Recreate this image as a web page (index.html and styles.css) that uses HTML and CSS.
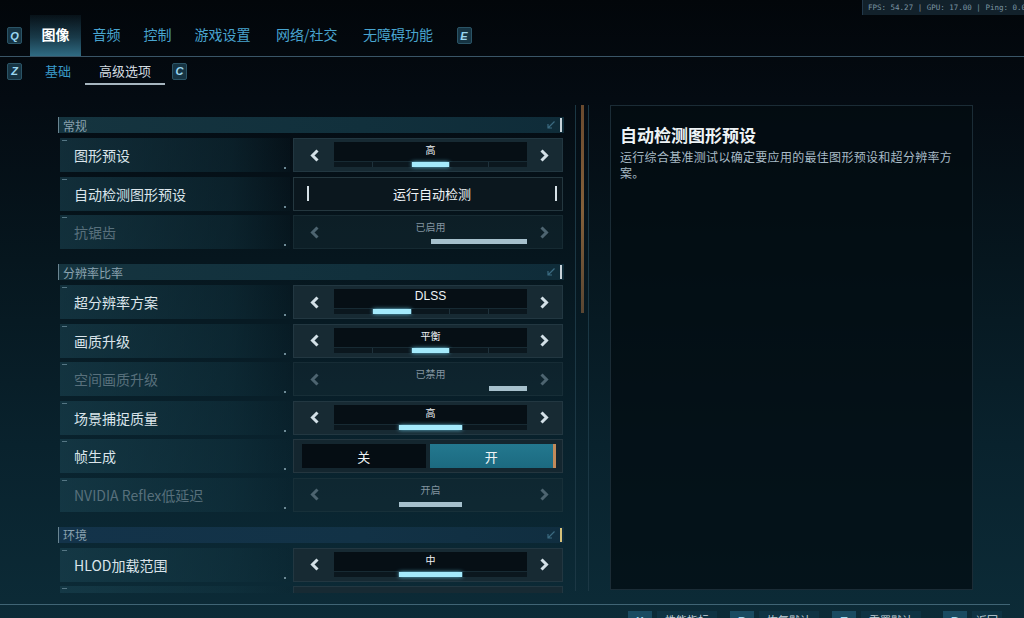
FILE: index.html
```html
<!DOCTYPE html>
<html lang="zh-CN">
<head>
  <meta charset="UTF-8" />
  <meta name="viewport" content="width=device-width, initial-scale=1" />
  <title>设置 | 图像</title>
  <link rel="stylesheet" href="styles.css">
</head>
<body>
  <div class="hud">FPS: 54.27 | GPU: 17.00 | Ping: 0.0</div>

  <!-- Main tabs -->
  <nav class="tabs">
    <span class="key">Q</span>
    <a class="tab active">图像</a>
    <a class="tab">音频</a>
    <a class="tab">控制</a>
    <a class="tab">游戏设置</a>
    <a class="tab">网络/社交</a>
    <a class="tab">无障碍功能</a>
    <span class="key">E</span>
  </nav>

  <!-- Sub tabs -->
  <nav class="subtabs">
    <span class="key">Z</span>
    <a class="subtab">基础</a>
    <a class="subtab active">高级选项</a>
    <span class="key">C</span>
  </nav>

  <main class="main">
    <section class="list">
      <div class="group">
        <span>常规</span>
        <svg class="corner" width="10" height="10" viewBox="0 0 10 10"><path d="M8.5 1.5 L2 8 M2 4 V8 H6" fill="none" stroke="currentColor" stroke-width="1.2"/></svg>
        <b class="mark"></b>
      </div>
      <div class="row">
        <div class="label">图形预设</div>
        <div class="ctl">
          <span class="arr"><svg width="9" height="13" viewBox="0 0 9 13"><path d="M7.5 1.5 L2.5 6.5 L7.5 11.5" fill="none" stroke="currentColor" stroke-width="3"/></svg></span>
          <div class="mid">
            <div class="val">高</div>
            <div class="segs"><i></i><i></i><i class="on"></i><i></i><i></i></div>
          </div>
          <span class="arr"><svg width="9" height="13" viewBox="0 0 9 13"><path d="M1.5 1.5 L6.5 6.5 L1.5 11.5" fill="none" stroke="currentColor" stroke-width="3"/></svg></span>
        </div>
      </div>
      <div class="row">
        <div class="label">自动检测图形预设</div>
        <div class="run"><i></i><span>运行自动检测</span><i></i></div>
      </div>
      <div class="row dis">
        <div class="label">抗锯齿</div>
        <div class="ctl">
          <span class="arr"><svg width="9" height="13" viewBox="0 0 9 13"><path d="M7.5 1.5 L2.5 6.5 L7.5 11.5" fill="none" stroke="currentColor" stroke-width="3"/></svg></span>
          <div class="mid">
            <div class="val">已启用</div>
            <div class="segs"><i></i><i class="on"></i></div>
          </div>
          <span class="arr"><svg width="9" height="13" viewBox="0 0 9 13"><path d="M1.5 1.5 L6.5 6.5 L1.5 11.5" fill="none" stroke="currentColor" stroke-width="3"/></svg></span>
        </div>
      </div>

      <div class="group">
        <span>分辨率比率</span>
        <svg class="corner" width="10" height="10" viewBox="0 0 10 10"><path d="M8.5 1.5 L2 8 M2 4 V8 H6" fill="none" stroke="currentColor" stroke-width="1.2"/></svg>
        <b class="mark"></b>
      </div>
      <div class="row">
        <div class="label">超分辨率方案</div>
        <div class="ctl">
          <span class="arr"><svg width="9" height="13" viewBox="0 0 9 13"><path d="M7.5 1.5 L2.5 6.5 L7.5 11.5" fill="none" stroke="currentColor" stroke-width="3"/></svg></span>
          <div class="mid">
            <div class="val latin">DLSS</div>
            <div class="segs"><i></i><i class="on"></i><i></i><i></i><i></i></div>
          </div>
          <span class="arr"><svg width="9" height="13" viewBox="0 0 9 13"><path d="M1.5 1.5 L6.5 6.5 L1.5 11.5" fill="none" stroke="currentColor" stroke-width="3"/></svg></span>
        </div>
      </div>
      <div class="row">
        <div class="label">画质升级</div>
        <div class="ctl">
          <span class="arr"><svg width="9" height="13" viewBox="0 0 9 13"><path d="M7.5 1.5 L2.5 6.5 L7.5 11.5" fill="none" stroke="currentColor" stroke-width="3"/></svg></span>
          <div class="mid">
            <div class="val">平衡</div>
            <div class="segs"><i></i><i></i><i class="on"></i><i></i><i></i></div>
          </div>
          <span class="arr"><svg width="9" height="13" viewBox="0 0 9 13"><path d="M1.5 1.5 L6.5 6.5 L1.5 11.5" fill="none" stroke="currentColor" stroke-width="3"/></svg></span>
        </div>
      </div>
      <div class="row dis">
        <div class="label">空间画质升级</div>
        <div class="ctl">
          <span class="arr"><svg width="9" height="13" viewBox="0 0 9 13"><path d="M7.5 1.5 L2.5 6.5 L7.5 11.5" fill="none" stroke="currentColor" stroke-width="3"/></svg></span>
          <div class="mid">
            <div class="val">已禁用</div>
            <div class="segs"><i></i><i></i><i></i><i></i><i class="on"></i></div>
          </div>
          <span class="arr"><svg width="9" height="13" viewBox="0 0 9 13"><path d="M1.5 1.5 L6.5 6.5 L1.5 11.5" fill="none" stroke="currentColor" stroke-width="3"/></svg></span>
        </div>
      </div>
      <div class="row">
        <div class="label">场景捕捉质量</div>
        <div class="ctl">
          <span class="arr"><svg width="9" height="13" viewBox="0 0 9 13"><path d="M7.5 1.5 L2.5 6.5 L7.5 11.5" fill="none" stroke="currentColor" stroke-width="3"/></svg></span>
          <div class="mid">
            <div class="val">高</div>
            <div class="segs"><i></i><i class="on"></i><i></i></div>
          </div>
          <span class="arr"><svg width="9" height="13" viewBox="0 0 9 13"><path d="M1.5 1.5 L6.5 6.5 L1.5 11.5" fill="none" stroke="currentColor" stroke-width="3"/></svg></span>
        </div>
      </div>
      <div class="row">
        <div class="label">帧生成</div>
        <div class="toggle"><span class="off">关</span><span class="on">开</span></div>
      </div>
      <div class="row dis">
        <div class="label">NVIDIA Reflex低延迟</div>
        <div class="ctl">
          <span class="arr"><svg width="9" height="13" viewBox="0 0 9 13"><path d="M7.5 1.5 L2.5 6.5 L7.5 11.5" fill="none" stroke="currentColor" stroke-width="3"/></svg></span>
          <div class="mid">
            <div class="val">开启</div>
            <div class="segs"><i></i><i class="on"></i><i></i></div>
          </div>
          <span class="arr"><svg width="9" height="13" viewBox="0 0 9 13"><path d="M1.5 1.5 L6.5 6.5 L1.5 11.5" fill="none" stroke="currentColor" stroke-width="3"/></svg></span>
        </div>
      </div>

      <div class="group env">
        <span>环境</span>
        <svg class="corner" width="10" height="10" viewBox="0 0 10 10"><path d="M8.5 1.5 L2 8 M2 4 V8 H6" fill="none" stroke="currentColor" stroke-width="1.2"/></svg>
        <b class="mark"></b>
      </div>
      <div class="row">
        <div class="label">HLOD加载范围</div>
        <div class="ctl">
          <span class="arr"><svg width="9" height="13" viewBox="0 0 9 13"><path d="M7.5 1.5 L2.5 6.5 L7.5 11.5" fill="none" stroke="currentColor" stroke-width="3"/></svg></span>
          <div class="mid">
            <div class="val">中</div>
            <div class="segs"><i></i><i class="on"></i><i></i></div>
          </div>
          <span class="arr"><svg width="9" height="13" viewBox="0 0 9 13"><path d="M1.5 1.5 L6.5 6.5 L1.5 11.5" fill="none" stroke="currentColor" stroke-width="3"/></svg></span>
        </div>
      </div>
      <div class="row">
        <div class="label"></div>
        <div class="ctl"></div>
      </div>
    </section>

    <div class="scroll"><div class="thumb"></div></div>

    <aside class="panel">
      <h1>自动检测图形预设</h1>
      <p>运行综合基准测试以确定要应用的最佳图形预设和超分辨率方案。</p>
    </aside>
  </main>

  <footer class="foot">
    <div class="fbtn"><span class="fkey">X</span><span class="ftxt">性能指标</span></div>
    <div class="fbtn"><span class="fkey">R</span><span class="ftxt">恢复默认</span></div>
    <div class="fbtn"><span class="fkey">T</span><span class="ftxt">重置默认</span></div>
    <div class="fbtn"><span class="fkey">B</span><span class="ftxt">返回</span></div>
  </footer>
</body>
</html>
```

FILE: styles.css
```css
* {
  box-sizing: border-box; margin: 0; padding: 0;
}
body {
  width: 1024px;
  height: 618px;
  overflow: hidden;
  position: relative;
  font-family: "Noto Sans CJK SC", "Noto Sans", sans-serif;
  color: #dce6ec;
  background: linear-gradient(180deg, #02060a 0%, #040b12 16%, #06161e 42%, #09222d 72%, #0c2b37 100%);
}
a {
  text-decoration: none;
  cursor: pointer;
}

/* fps overlay */
.hud {
  position: absolute;
  top: 0;
  right: 0;
  width: 162px;
  height: 15px;
  padding-left: 5px;
  background: #12212b;
  border-left: 1px solid #22384a;
  font: 7.5px/15px "DejaVu Sans Mono", monospace;
  color: #7c95a3;
  white-space: nowrap;
  overflow: hidden;
}

.key {
  width: 15px;
  height: 17px;
  display: flex;
  align-items: center;
  justify-content: center;
  background: #163443;
  border: 1px solid #2b5466;
  border-radius: 2px;
  font: italic bold 11px "Liberation Sans", sans-serif;
  color: #9ad6f0;
}

/* main tabs */
.tabs {
  display: flex;
  align-items: center;
  height: 57px;
  padding: 15px 0 0 7px;
  border-bottom: 1px solid #3a5567;
}
.tabs .key:first-child { margin-right: 8px; }
.tabs .key:last-child { margin-left: 12px; }
.tab {
  height: 41px;
  padding: 0 11.5px 3px;
  display: flex;
  align-items: center;
  font-size: 14px;
  color: #48a4cf;
}
.tab:nth-child(6), .tab:nth-child(7) { margin-left: 2.5px; }
.tab.active {
  color: #ffffff;
  font-weight: 700;
  background: linear-gradient(180deg, rgba(36,80,100,0.15) 0%, rgba(40,92,114,0.6) 55%, #2f6b83 100%);
}

/* sub tabs */
.subtabs {
  display: flex;
  align-items: center;
  height: 28px;
  padding-left: 7px;
}
.subtabs .key:first-child { margin-right: 9px; }
.subtabs .key:last-child { margin-left: 7px; }
.subtab {
  height: 28px;
  padding: 0 14px;
  display: flex;
  align-items: center;
  font-size: 13px;
  color: #3a9ac9;
  border-bottom: 2px solid transparent;
}
.subtab.active {
  color: #d3dce1;
  border-bottom-color: #a6b5be;
}

.main {
  display: flex;
  height: 488px;
  margin-top: 20px;
}

/* settings list */
.list {
  width: 506px;
  margin-left: 58px;
  padding-top: 12px;
  overflow: hidden;
}
.group {
  display: flex;
  align-items: center;
  height: 16px;
  margin-bottom: 5px;
  padding-left: 4px;
  border-left: 1px solid #6a8592;
  background: linear-gradient(90deg, #15343f, #11303c 60%, #0f2c39);
  font-size: 12px;
  color: #8aa2af;
}
.row + .group { margin-top: 15px; }
.group span { flex: 1; }
.group .corner {
  color: #3a6a80;
  margin-right: 4px;
}
.group .mark {
  width: 2px;
  height: 14px;
  margin-right: 2px;
  background: #c8d3d9;
}
.group.env {
  background: linear-gradient(90deg, #13334a, #123246 60%, #102e40);
}
.group.env .mark { background: #d6c27a; }

.row {
  display: flex;
  height: 34px;
  margin-bottom: 4.5px;
}
.label {
  position: relative;
  width: 230px;
  margin-left: 2px;
  padding-left: 14px;
  display: flex;
  align-items: center;
  font-size: 14px;
  color: #dbe5eb;
  background: linear-gradient(90deg, rgba(26,66,80,0.6), rgba(18,52,64,0.45) 75%, rgba(12,36,46,0.15));
}
.label::before {
  content: "";
  position: absolute;
  left: 2px;
  top: 2px;
  width: 5px;
  height: 1px;
  background: #557684;
}
.label::after {
  content: "";
  position: absolute;
  right: 4px;
  bottom: 3px;
  width: 2px;
  height: 2px;
  background: #6d8a96;
}
.row.dis .label { color: #58707c; }

/* selector control */
.ctl {
  margin-left: 3px;
  width: 270px;
  display: flex;
  background: #172a33;
  border: 1px solid #223741;
}
.arr {
  width: 40px;
  display: flex;
  align-items: center;
  justify-content: center;
  color: #d3e0e7;
}
.arr:last-child { width: 35px; }
.mid {
  flex: 1;
  display: flex;
  flex-direction: column;
  padding: 3px 0 4px;
}
.val {
  height: 19px;
  background: #060f15;
  text-align: center;
  font-size: 10px;
  line-height: 15px;
  color: #eef3f6;
}
.val.latin {
  font-family: "Liberation Sans", sans-serif;
  font-size: 12px;
}
.segs {
  display: flex;
  gap: 1px;
  height: 5px;
  margin-top: 1px;
  background: #1e313b;
}
.segs i {
  flex: 1;
  background: #0b171e;
}
.segs i.on {
  background: #a4eafc;
  box-shadow: 0 0 4px rgba(110,210,240,0.8);
}
.dis .ctl {
  background: rgba(22,44,54,0.45);
  border-color: rgba(40,62,72,0.35);
}
.dis .arr { color: #4d6470; }
.dis .val {
  background: transparent;
  color: #8394a0;
}
.dis .segs, .dis .segs i { background: transparent; }
.dis .segs i.on {
  background: #a6c0cc;
  box-shadow: none;
}

/* run button */
.run {
  margin-left: 3px;
  width: 270px;
  display: flex;
  align-items: center;
  padding: 0 5px 0 13px;
  background: #0b171e;
  border: 1px solid #24373f;
  font-size: 13px;
  color: #eef3f6;
}
.run i {
  width: 2px;
  height: 15px;
  background: #d5e0e6;
}
.run span {
  flex: 1;
  text-align: center;
}

/* on / off toggle */
.toggle {
  margin-left: 3px;
  width: 270px;
  display: flex;
  gap: 4px;
  padding: 4px 6px 4px 8px;
  background: #14262f;
  border: 1px solid #24363f;
}
.toggle span {
  flex: 1;
  display: flex;
  align-items: center;
  justify-content: center;
  font-size: 13px;
  color: #f0f4f6;
}
.toggle .off { background: #050d13; }
.toggle .on {
  background: linear-gradient(180deg, #23788f, #1c6a80);
  border-right: 3px solid #c28a5a;
}

/* scrollbar */
.scroll {
  width: 14px;
  height: 486px;
  margin-left: 11px;
  display: flex;
  justify-content: center;
  border-left: 1px solid #1b3744;
  border-right: 1px solid #1b3744;
}
.thumb {
  width: 3px;
  height: 208px;
  background: linear-gradient(180deg, #6a4a2e, #84603a 50%, #5a4632);
}

/* description panel */
.panel {
  width: 363px;
  height: 485px;
  margin-left: 21px;
  padding: 17px 9px;
  background: rgba(3,12,18,0.75);
  border: 1px solid #1b2c36;
}
.panel h1 {
  font-size: 17px;
  font-weight: 700;
  line-height: 24px;
  color: #eef3f6;
}
.panel p {
  width: 346px;
  margin-top: 2px;
  font-size: 12px;
  letter-spacing: 0.3px;
  line-height: 16px;
  color: #a8bbc6;
}

/* bottom hints */
.foot {
  width: 1010px;
  margin-top: 11px;
  padding: 6px 8px 0 0;
  display: flex;
  justify-content: flex-end;
  border-top: 1px solid #406575;
}
.fbtn {
  display: flex;
  gap: 5px;
  margin-left: 13px;
}
.fbtn:last-child { margin-left: 22px; }
.fkey {
  width: 24px;
  height: 20px;
  background: #1a4b61;
  font: bold 11px/20px "Liberation Sans", sans-serif;
  text-align: center;
  color: #9fd6ec;
}
.ftxt {
  height: 20px;
  padding: 0 8px;
  background: #0f3343;
  font-size: 11px;
  line-height: 18px;
  color: #c6d5dd;
}
.fbtn:last-child .ftxt { padding: 0 4px; }
```
